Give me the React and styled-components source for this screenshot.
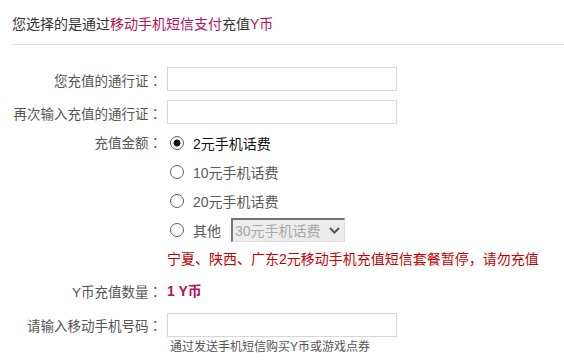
import styled, { createGlobalStyle } from "styled-components";

const GlobalStyle = createGlobalStyle`
  body {
    margin: 0;
    background: #fff;
    font-family: "Liberation Sans", "Noto Sans CJK SC", sans-serif;
  }
`;

const options = [
  { id: "2", text: "2元手机话费", checked: true },
  { id: "10", text: "10元手机话费" },
  { id: "20", text: "20元手机话费" },
];

function App() {
  return (
    <Page>
      <GlobalStyle />
      <Header>
        您选择的是通过<Accent>移动手机短信支付</Accent>充值<Accent>Y币</Accent>
      </Header>
      <Form>
        <Label>您充值的通行证</Label>
        <Field>
          <TextInput />
        </Field>

        <Label>再次输入充值的通行证</Label>
        <Field>
          <TextInput />
        </Field>

        <Label $top>充值金额</Label>
        <Options>
          {options.map((o) => (
            <Option key={o.id}>
              <Radio $checked={o.checked} />
              <OptionText $checked={o.checked}>{o.text}</OptionText>
            </Option>
          ))}
          <Option>
            <Radio />
            <OptionText>其他</OptionText>
            <FakeSelect>
              <span>30元手机话费</span>
              <svg width="11" height="7" viewBox="0 0 11 7">
                <path d="M1 1l4.5 4.5L10 1" fill="none" stroke="#555" strokeWidth="2" />
              </svg>
            </FakeSelect>
          </Option>
        </Options>

        <Spacer />
        <Warning>宁夏、陕西、广东2元移动手机充值短信套餐暂停，请勿充值</Warning>

        <Label>Y币充值数量</Label>
        <Field>
          <Amount>1 Y币</Amount>
        </Field>

        <Label $gapTop>请输入移动手机号码</Label>
        <Field $gapTop>
          <TextInput />
        </Field>
        <Spacer />
        <Hint>通过发送手机短信购买Y币或游戏点券</Hint>
      </Form>
    </Page>
  );
}

export default App;

const Page = styled.div`
  width: 564px;
  height: 363px;
  overflow: hidden;
`;

const Header = styled.div`
  margin-left: 12px;
  height: 45px;
  box-sizing: border-box;
  line-height: 48px;
  font-size: 14px;
  color: #333;
  border-bottom: 1px solid #e2e2e2;
`;

const Accent = styled.span`
  color: #b3145a;
`;

const Form = styled.div`
  display: grid;
  grid-template-columns: 162px 1fr;
  column-gap: 5px;
  padding-top: 18px;
`;

const Label = styled.div`
  height: 32px;
  line-height: 32px;
  text-align: right;
  font-size: 13.5px;
  color: #555;
  white-space: nowrap;
  margin-top: ${(p) => (p.$gapTop ? "2px" : "1px")};
  ${(p) => p.$top && "margin-top: -2px; height: 29px; line-height: 31px;"}

  &::after {
    content: "：";
    font-family: "Noto Sans CJK TC", sans-serif;
  }
`;

const Field = styled.div`
  height: 32px;
  display: flex;
  align-items: center;
  margin-top: ${(p) => (p.$gapTop ? "2px" : "0")};
`;

const TextInput = styled.input`
  width: 230px;
  height: 24px;
  box-sizing: border-box;
  border: 1px solid #d6d6d6;
  outline: none;
  padding: 0 4px;
  margin: 0;
`;

const Options = styled.div`
  display: flex;
  flex-direction: column;
  margin-top: -1px;
`;

const Option = styled.div`
  height: 29px;
  display: flex;
  align-items: center;
`;

const Radio = styled.span`
  width: 12px;
  height: 12px;
  margin-left: 3px;
  border: 1px solid #5e5e5e;
  border-radius: 50%;
  flex: none;
  background: ${(p) =>
    p.$checked ? "radial-gradient(circle, #111 0 3.2px, #fff 3.8px)" : "#fff"};
`;

const OptionText = styled.span`
  margin-left: 9px;
  font-size: 14px;
  color: ${(p) => (p.$checked ? "#111" : "#5a5a5a")};
`;

const FakeSelect = styled.div`
  margin-left: 10px;
  width: 114px;
  height: 24px;
  box-sizing: border-box;
  display: flex;
  align-items: center;
  justify-content: space-between;
  padding: 0 4px 0 2px;
  background: #ececec;
  border-top: 2px solid #777;
  border-left: 2px solid #777;
  border-right: 1px solid #ddd;
  border-bottom: 1px solid #ddd;
  font-size: 14px;
  color: #a8a8a8;
`;

const Spacer = styled.div``;

const Warning = styled.div`
  height: 30px;
  line-height: 30px;
  font-size: 14px;
  color: #c80000;
  white-space: nowrap;
`;

const Amount = styled.span`
  font-size: 14px;
  font-weight: bold;
  color: #b3145a;
`;

const Hint = styled.div`
  height: 12px;
  line-height: 12px;
  font-size: 12px;
  color: #555;
  padding-left: 3px;
`;
